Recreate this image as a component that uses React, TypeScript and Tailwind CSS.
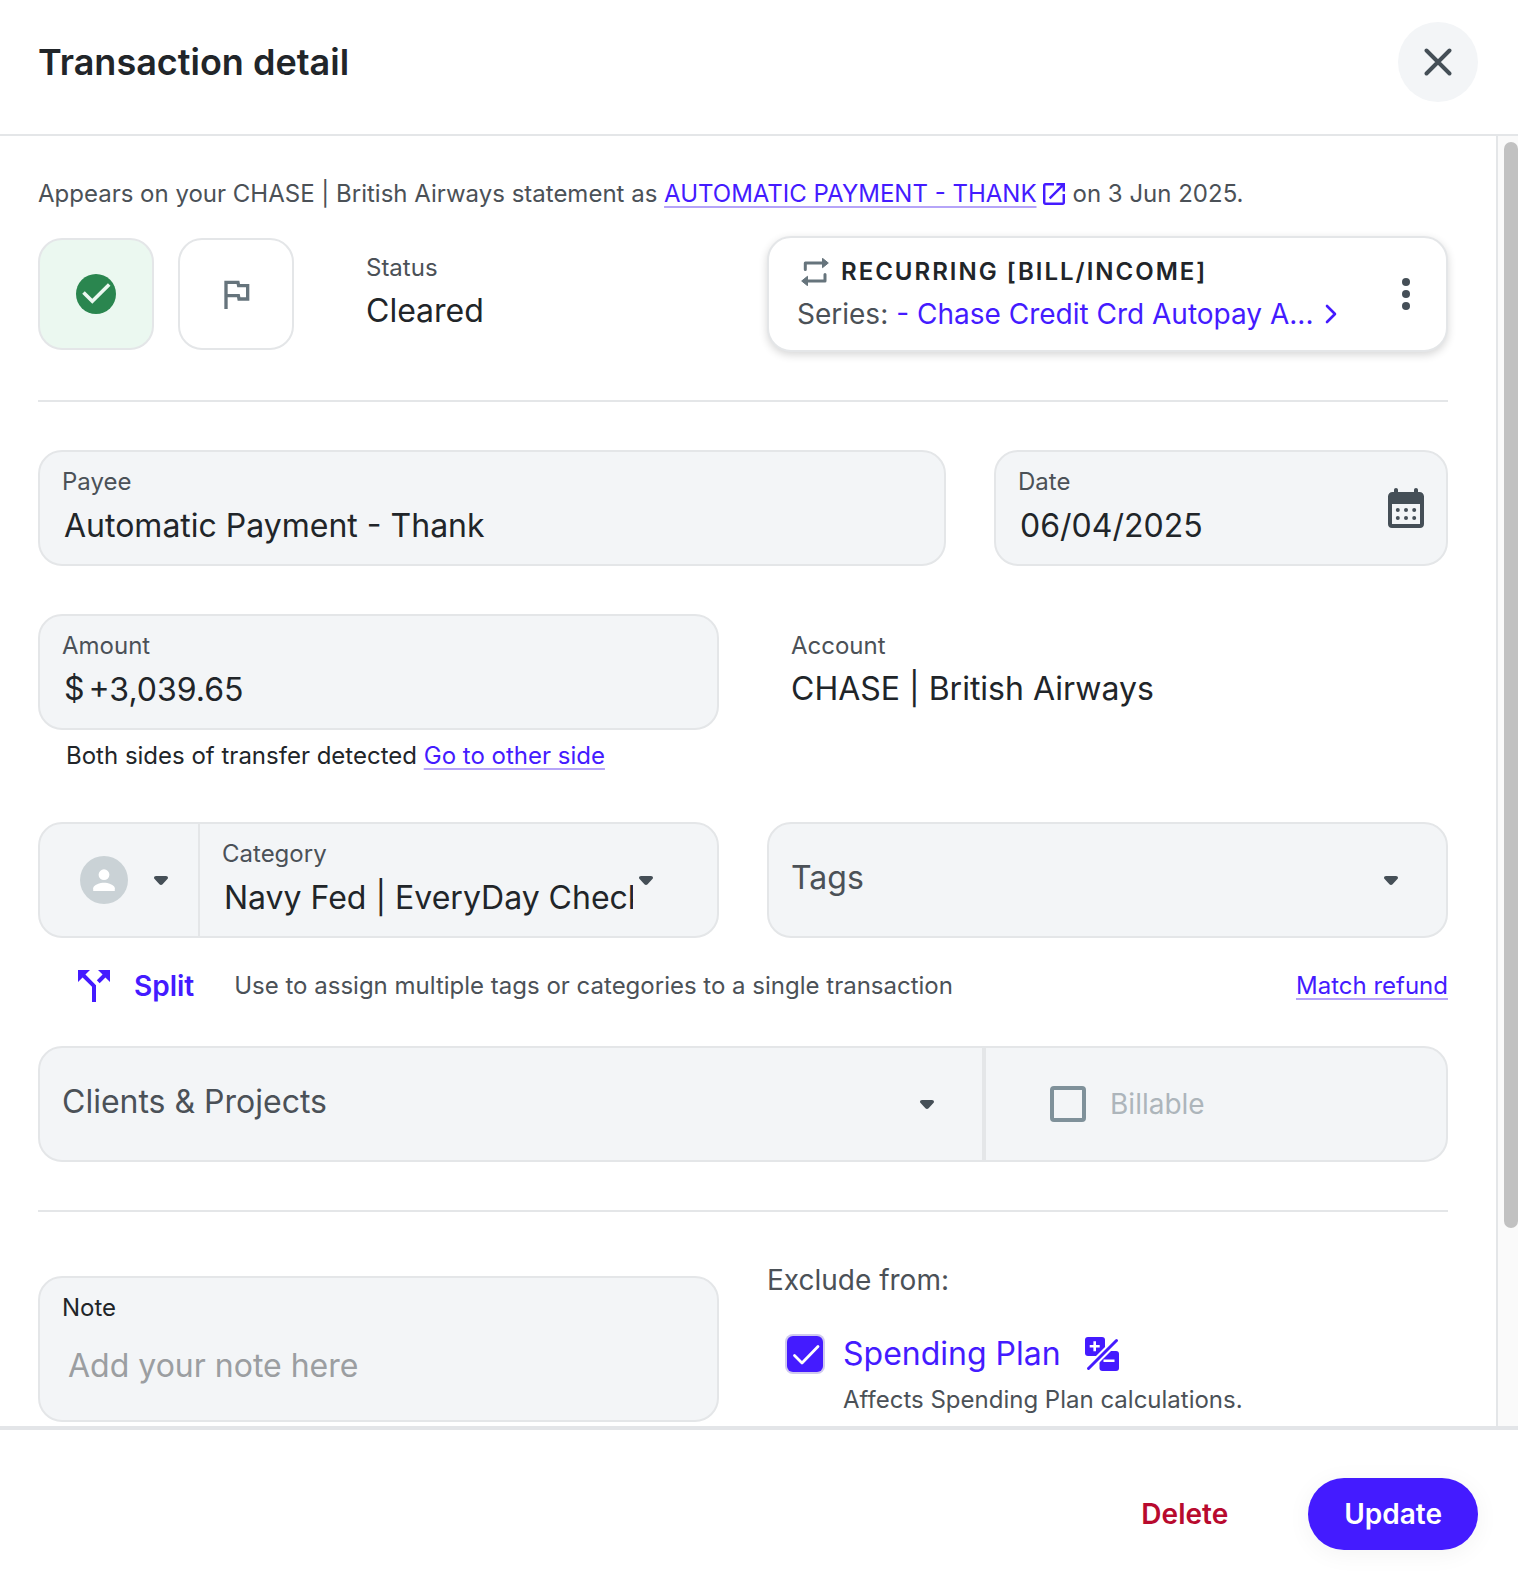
import { useState } from 'react';
import type { ReactNode } from 'react';
import { clsx } from 'clsx';

const fieldBox = 'h-[116px] rounded-3xl border-2 border-[#e4e6e8] bg-[#f3f5f7]';
const fieldLabel = 'block text-2xl leading-8 text-[#4b5157]';
const fieldInput = 'block h-[54px] w-full bg-transparent pl-0.5 text-[32px] text-[#212529] outline-none';
const linkStyle = 'text-[#441bff] underline decoration-[#b5a4f8] decoration-2 underline-offset-4 [text-decoration-skip-ink:none]';

function Caret({ className }: { className?: string }) {
  return (
    <svg viewBox="0 0 14 9" className={clsx('h-[9px] w-3.5 shrink-0', className)} fill="#454f57" aria-hidden="true">
      <path d="M2 0h10c1.8 0 2.6 1.8 1.4 3.1L8.600 8.200c-.9 1-2.300 1-3.200 0L.6 3.100C-.6 1.800.2 0 2 0z" />
    </svg>
  );
}

function RepeatIcon() {
  return (
    <svg viewBox="0 0 28 28" className="h-7 w-7 shrink-0" aria-hidden="true">
      <path d="M4.300 11.500V5H22M24 16.500V23H6" fill="none" stroke="#66747c" strokeWidth="3" strokeLinecap="round" strokeLinejoin="round" />
      <path d="M21.500.3v9.400L27.300 5zM6.500 18.300v9.400L.7 23z" fill="#66747c" stroke="#66747c" strokeLinejoin="round" />
    </svg>
  );
}

function CalendarIcon() {
  return (
    <svg viewBox="0 0 36 40" className="h-10 w-9" aria-hidden="true">
      <path
        d="M8 0c1.200 0 2 .8 2 2v2h16V2c0-1.200.8-2 2-2s2 .8 2 2v2h1.500C34 4 36 6 36 8.500V36c0 2.400-1.600 4-4 4H4c-2.400 0-4-1.600-4-4V8.500C0 6 2 4 4.500 4H6V2c0-1.200.8-2 2-2z"
        fill="#454f57"
      />
      <path d="M4 16h28v20H4z" fill="#f3f5f7" />
      <g fill="#454f57">
        <circle cx="9.800" cy="22" r="2" />
        <circle cx="18" cy="22" r="2" />
        <circle cx="26.200" cy="22" r="2" />
        <circle cx="9.800" cy="30" r="2" />
        <circle cx="18" cy="30" r="2" />
        <circle cx="26.200" cy="30" r="2" />
      </g>
    </svg>
  );
}

function PlanIcon() {
  return (
    <svg viewBox="0 0 34 34" className="h-[34px] w-[34px]" aria-hidden="true">
      <rect width="20" height="19" rx="3" fill="#441bff" />
      <rect x="14.500" y="14" width="19.500" height="20" rx="3" fill="#441bff" />
      <path d="M9.700 4.300v10M4.700 9.300h10M18.500 23.800h11" stroke="#fff" strokeWidth="2.600" />
      <path d="M1 34 34 1" stroke="#fff" strokeWidth="7" />
      <path d="M3.500 31.500 31.500 3.500" stroke="#441bff" strokeWidth="3" strokeLinecap="round" />
    </svg>
  );
}

function ReadOnlyField({ label, value }: { label: string; value: string }) {
  return (
    <div className="h-[116px] pt-4">
      <div className={fieldLabel}>{label}</div>
      <div className="text-[32px] leading-[54px] text-[#212529]">{value}</div>
    </div>
  );
}

function Field({ id, label, children }: { id: string; label: string; children: ReactNode }) {
  return (
    <div className="min-w-0 flex-1 pt-3.5">
      <label htmlFor={id} className={fieldLabel}>
        {label}
      </label>
      {children}
    </div>
  );
}

export default function App() {
  const [payee, setPayee] = useState('Automatic Payment - Thank');
  const [date, setDate] = useState('06/04/2025');
  const [amount, setAmount] = useState('+3,039.65');
  const [note, setNote] = useState('');
  const [excluded, setExcluded] = useState(true);

  return (
    <div className="flex h-screen flex-col bg-white font-['Inter',sans-serif] text-[#212529]">
      {/* Header */}
      <header className="flex shrink-0 items-center justify-between border-b-2 border-[#e4e6e8] pt-[22px] pr-10 pb-8 pl-[38px]">
        <h1 className="text-4xl font-semibold">Transaction detail</h1>
        <button type="button" aria-label="Close" className="flex h-20 w-20 items-center justify-center rounded-full bg-[#f3f5f7]">
          <svg viewBox="0 0 28 28" className="h-7 w-7" fill="none" stroke="#454f57" strokeWidth="3.900" strokeLinecap="round">
            <path d="M2.500 2.500l23 23M25.500 2.500l-23 23" />
          </svg>
        </button>
      </header>

      <div className="flex min-h-0 flex-1">
        <main className="min-w-0 flex-1 overflow-y-auto pt-[42px] pr-12 pl-[38px] [scrollbar-width:none]">
          <p className="flex items-center text-2xl leading-8 text-[#4b5157]">
            <span>
              Appears on your CHASE | British Airways statement as{' '}
              <a href="#statement" className={linkStyle}>
                AUTOMATIC PAYMENT - THANK
              </a>
            </span>
            <svg viewBox="3 3 18 18" className="mr-2 ml-1.5 h-[22px] w-[22px] shrink-0" fill="#441bff" aria-hidden="true">
              <path d="M19 19H5V5h7V3H5c-1.110 0-2 .9-2 2v14c0 1.100.89 2 2 2h14c1.100 0 2-.9 2-2v-7h-2v7zM14 3v2h3.590l-9.830 9.830 1.410 1.410L19 6.410V10h2V3h-7z" />
            </svg>
            <span>on 3 Jun 2025.</span>
          </p>

          {/* Status row */}
          <div className="mt-[26px] grid grid-cols-2 gap-12">
            <div className="flex items-center">
              <button type="button" aria-label="Mark as reviewed" className="flex h-28 w-[116px] items-center justify-center rounded-3xl border-2 border-[#e4e6e8] bg-[#ebf8f0]">
                <svg viewBox="0 0 40 40" className="h-10 w-10">
                  <circle cx="20" cy="20" r="20" fill="#2a864f" />
                  <path d="M7.500 18.500l8.800 8.800L33.200 10.400" fill="none" stroke="#ebf8f0" strokeWidth="3.600" />
                </svg>
              </button>
              <button type="button" aria-label="Flag" className="ml-6 flex h-28 w-[116px] items-center justify-center rounded-3xl border-2 border-[#e4e6e8] bg-white">
                <svg viewBox="0 0 24 24" className="h-10 w-10" fill="#66747c">
                  <path d="M12.360 6l.4 2H18v6h-3.360l-.4-2H7V6h5.360M14 4H5v17h2v-7h5.600l.4 2h7V6h-5.600L14 4z" />
                </svg>
              </button>
              <div className="ml-[72px]">
                <ReadOnlyField label="Status" value="Cleared" />
              </div>
            </div>

            <section className="flex h-[116px] items-center justify-between rounded-3xl border-2 border-[#e4e6e8] bg-white pr-9 pl-7 shadow-[0_3px_8px_rgba(0,0,0,0.16)]">
              <div className="min-w-0 pt-0.5">
                <h2 className="flex items-center gap-3 pl-1 text-2xl leading-8 font-semibold tracking-[2px]">
                  <RepeatIcon />
                  RECURRING [BILL/INCOME]
                </h2>
                <div className="mt-1.5 flex items-center gap-2 text-[28px] leading-10 whitespace-nowrap text-[#4b5157]">
                  Series:
                  <a href="#series" className="flex items-center gap-3 text-[#441bff]">
                    - Chase Credit Crd Autopay A...
                    <svg viewBox="0 0 12 20" className="h-5 w-3" fill="none" stroke="#441bff" strokeWidth="2.600" strokeLinecap="round" strokeLinejoin="round">
                      <path d="M2 2l8 8-8 8" />
                    </svg>
                  </a>
                </div>
              </div>
              <button type="button" aria-label="More options">
                <svg viewBox="0 0 8 32" className="h-8 w-2" fill="#454f57">
                  <circle cx="4" cy="4" r="4" />
                  <circle cx="4" cy="16" r="4" />
                  <circle cx="4" cy="28" r="4" />
                </svg>
              </button>
            </section>
          </div>

          <hr className="my-12 border-t-2 border-[#e4e6e8]" />

          {/* Payee and date */}
          <div className="grid grid-cols-[2fr_1fr] gap-12">
            <div className={clsx(fieldBox, 'flex px-[22px]')}>
              <Field id="payee" label="Payee">
                <input id="payee" type="text" value={payee} onChange={(e) => setPayee(e.target.value)} className={fieldInput} />
              </Field>
            </div>
            <div className={clsx(fieldBox, 'flex px-[22px]')}>
              <Field id="date" label="Date">
                <input id="date" type="text" value={date} onChange={(e) => setDate(e.target.value)} className={fieldInput} />
              </Field>
              <button type="button" aria-label="Open calendar">
                <CalendarIcon />
              </button>
            </div>
          </div>

          {/* Amount and account */}
          <div className="mt-12 grid grid-cols-2 gap-12">
            <div>
              <div className={clsx(fieldBox, 'flex px-[22px]')}>
                <Field id="amount" label="Amount">
                  <div className="flex items-center gap-0.5 pl-0.5 text-[32px]">
                    $
                    <input id="amount" type="text" value={amount} onChange={(e) => setAmount(e.target.value)} className={fieldInput} />
                  </div>
                </Field>
              </div>
              <p className="mt-2.5 pl-7 text-2xl leading-8">
                Both sides of transfer detected{' '}
                <a href="#other-side" className={linkStyle}>
                  Go to other side
                </a>
              </p>
            </div>
            <div className="pl-6">
              <ReadOnlyField label="Account" value="CHASE | British Airways" />
            </div>
          </div>

          {/* Category and tags */}
          <div className="mt-[50px] grid grid-cols-2 gap-12">
            <div className={clsx(fieldBox, 'flex overflow-hidden')}>
              <button type="button" aria-label="Category type" className="flex w-40 shrink-0 items-center gap-[26px] border-r-2 border-[#e4e6e8] pl-10">
                <svg viewBox="0 0 48 48" className="h-12 w-12">
                  <circle cx="24" cy="24" r="24" fill="#cad2d6" />
                  <circle cx="24" cy="18.700" r="5.400" fill="#fff" />
                  <path d="M13.200 35v-2.700c0-3.600 7.200-5.600 10.800-5.600s10.800 2 10.800 5.600V35z" fill="#fff" />
                </svg>
                <Caret />
              </button>
              <div className="relative flex min-w-0 flex-1 pr-[84px] pl-[22px]">
                <Field id="category" label="Category">
                  <input id="category" type="text" role="combobox" aria-expanded="false" defaultValue="Navy Fed | EveryDay Checking" className={fieldInput} />
                </Field>
                <Caret className="pointer-events-none absolute top-[52px] right-16" />
              </div>
            </div>
            <div className={clsx(fieldBox, 'relative')}>
              <select aria-label="Tags" className="h-full w-full appearance-none bg-transparent pr-20 pb-1 pl-[22px] text-[32px] text-[#4b5157] outline-none">
                <option>Tags</option>
              </select>
              <Caret className="pointer-events-none absolute top-[52px] right-12" />
            </div>
          </div>

          <div className="mt-8 flex h-8 items-center pl-10 text-2xl leading-8 text-[#4b5157]">
            <button type="button" className="flex items-center gap-6 text-[28px] font-semibold text-[#441bff]">
              <svg viewBox="4 4 16 16" className="h-8 w-8" fill="#441bff" aria-hidden="true">
                <path d="M14 4l2.290 2.290-2.880 2.880 1.420 1.420 2.880-2.880L20 10V4zm-4 0H4v6l2.290-2.290 4.710 4.700V20h2v-8.410l-5.290-5.300z" />
              </svg>
              Split
            </button>
            <span className="ml-10">Use to assign multiple tags or categories to a single transaction</span>
            <a href="#refund" className={clsx(linkStyle, 'ml-auto')}>
              Match refund
            </a>
          </div>

          {/* Clients */}
          <div className={clsx(fieldBox, 'mt-11 flex')}>
            <div className="relative flex-1">
              <select aria-label="Clients & Projects" className="h-full w-full appearance-none bg-transparent pr-20 pb-1 pl-[22px] text-[32px] text-[#4b5157] outline-none">
                <option>Clients &amp; Projects</option>
              </select>
              <Caret className="pointer-events-none absolute top-[52px] right-12" />
            </div>
            <label className="flex w-[33%] items-center gap-6 border-l-4 border-[#e4e6e8] pl-16 text-[28px] text-[#adb5bb]">
              <input type="checkbox" disabled className="h-9 w-9 appearance-none rounded border-4 border-[#7f919a]" />
              Billable
            </label>
          </div>

          <hr className="my-12 border-t-2 border-[#e4e6e8]" />

          {/* Note and exclusions */}
          <div className="grid grid-cols-2 gap-12">
            <div className="mt-4 h-[146px] rounded-3xl border-2 border-[#e4e6e8] bg-[#f3f5f7] px-[22px] pt-3.5">
              <label htmlFor="note" className="block text-2xl leading-8">
                Note
              </label>
              <textarea
                id="note"
                rows={1}
                value={note}
                onChange={(e) => setNote(e.target.value)}
                placeholder="Add your note here"
                className="mt-5 block w-full resize-none bg-transparent px-1.5 text-[32px] leading-[44px] outline-none placeholder:text-[#9b9ea1]"
              />
            </div>
            <fieldset>
              <legend className="text-[28px] leading-10 text-[#4b5157]">Exclude from:</legend>
              <div className="mt-8 flex h-11 items-center pl-5">
                <span className="relative flex h-9 w-9">
                  <input
                    id="plan"
                    type="checkbox"
                    checked={excluded}
                    onChange={(e) => setExcluded(e.target.checked)}
                    className="h-9 w-9 appearance-none rounded-md bg-white ring-2 ring-[#cfc9ee] checked:bg-[#441bff]"
                  />
                  {excluded && (
                    <svg viewBox="0 0 36 36" className="pointer-events-none absolute inset-0" fill="none" stroke="#fff" strokeWidth="2.800" strokeLinecap="round" strokeLinejoin="round">
                      <path d="M7.500 19.500l7.500 7.500L31 10.500" />
                    </svg>
                  )}
                </span>
                <label htmlFor="plan" className="mr-6 ml-5 text-[32px] text-[#441bff]">
                  Spending Plan
                </label>
                <PlanIcon />
              </div>
              <p className="mt-2 pl-19 text-2xl leading-8 text-[#4b5157]">Affects Spending Plan calculations.</p>
            </fieldset>
          </div>
        </main>

        {/* Scroll track */}
        <div className="w-[22px] shrink-0 border-l-2 border-[#e4e6e8] bg-[#fafafa] py-1.5 pl-1.5" aria-hidden="true">
          <div className="h-[85%] rounded-full bg-[#c1c1c1]" />
        </div>
      </div>

      {/* Footer */}
      <footer className="flex shrink-0 items-center justify-end gap-20 border-t-4 border-[#e3e5e8] pt-12 pr-10 pb-7 text-[28px] font-semibold">
        <button type="button" className="text-[#b80a2e]">
          Delete
        </button>
        <button type="button" className="h-[72px] rounded-full bg-[#441bff] px-9 text-white shadow-[0_4px_24px_rgba(0,0,0,0.05)]">
          Update
        </button>
      </footer>
    </div>
  );
}
